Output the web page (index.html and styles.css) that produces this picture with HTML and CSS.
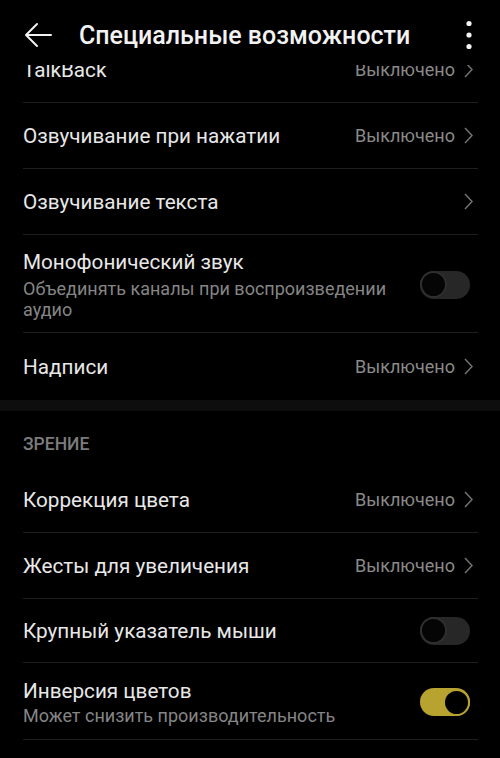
FILE: index.html
```html
<!DOCTYPE html>
<html lang="ru">
<head>
  <meta charset="UTF-8">
  <title>Специальные возможности</title>
  <link rel="stylesheet" href="styles.css">
</head>
<body>
  <header class="topbar">
    <svg class="back" width="28" height="26" viewBox="0 0 28 26">
      <path d="M27 13H3M13 2L2 13l11 11" fill="none" stroke="#f2f2f2" stroke-width="2" stroke-linecap="round" stroke-linejoin="round"/>
    </svg>
    <h1 class="title">Специальные возможности</h1>
    <svg class="more" width="8" height="30" viewBox="0 0 8 30">
      <circle cx="4" cy="3.5" r="2.6" fill="#f2f2f2"/>
      <circle cx="4" cy="15" r="2.6" fill="#f2f2f2"/>
      <circle cx="4" cy="26.5" r="2.6" fill="#f2f2f2"/>
    </svg>
  </header>

  <div class="viewport">
    <div class="list">
      <div class="row">
        <span class="label">TalkBack</span>
        <span class="value">Выключено</span>
        <svg class="chev" width="9" height="17" viewBox="0 0 9 17"><path d="M1 1l7 7.5L1 16" fill="none" stroke="#727272" stroke-width="1.5"/></svg>
      </div>
      <div class="row">
        <span class="label">Озвучивание при нажатии</span>
        <span class="value">Выключено</span>
        <svg class="chev" width="9" height="17" viewBox="0 0 9 17"><path d="M1 1l7 7.5L1 16" fill="none" stroke="#727272" stroke-width="1.5"/></svg>
      </div>
      <div class="row">
        <span class="label">Озвучивание текста</span>
        <svg class="chev" width="9" height="17" viewBox="0 0 9 17"><path d="M1 1l7 7.5L1 16" fill="none" stroke="#727272" stroke-width="1.5"/></svg>
      </div>
      <div class="row row-tall">
        <div class="text">
          <div class="label">Монофонический звук</div>
          <div class="sub">Объединять каналы при воспроизведении аудио</div>
        </div>
        <span class="switch"></span>
      </div>
      <div class="row row-last">
        <span class="label">Надписи</span>
        <span class="value">Выключено</span>
        <svg class="chev" width="9" height="17" viewBox="0 0 9 17"><path d="M1 1l7 7.5L1 16" fill="none" stroke="#727272" stroke-width="1.5"/></svg>
      </div>

      <div class="gap"></div>
      <div class="section">ЗРЕНИЕ</div>

      <div class="row">
        <span class="label">Коррекция цвета</span>
        <span class="value">Выключено</span>
        <svg class="chev" width="9" height="17" viewBox="0 0 9 17"><path d="M1 1l7 7.5L1 16" fill="none" stroke="#727272" stroke-width="1.5"/></svg>
      </div>
      <div class="row">
        <span class="label">Жесты для увеличения</span>
        <span class="value">Выключено</span>
        <svg class="chev" width="9" height="17" viewBox="0 0 9 17"><path d="M1 1l7 7.5L1 16" fill="none" stroke="#727272" stroke-width="1.5"/></svg>
      </div>
      <div class="row row-short">
        <span class="label">Крупный указатель мыши</span>
        <span class="switch"></span>
      </div>
      <div class="row row-mid">
        <div class="text">
          <div class="label">Инверсия цветов</div>
          <div class="sub">Может снизить производительность</div>
        </div>
        <span class="switch on"></span>
      </div>
    </div>
  </div>
</body>
</html>
```

FILE: styles.css
```css
body {
  margin: 0;
  background: #000;
  color: #e8e8e8;
  font-family: Roboto, "Noto Sans", sans-serif;
  height: 758px;
  overflow: hidden;
}
.topbar {
  height: 65px;
  display: flex;
  align-items: center;
  padding: 7px 0 0 24px;
  box-sizing: border-box;
  background: #000;
}
.back {
  margin-top: -2px;
}
.title {
  margin: -1px 0 0 27px;
  font-size: 25px;
  font-weight: 500;
  color: #f2f2f2;
  flex: 1;
}
.more {
  margin-right: 27px;
  margin-top: -2px;
}
.viewport {
  height: 693px;
  overflow: hidden;
}
.list {
  margin-top: -28px;
}
.row {
  height: 66px;
  margin: 0 22px 0 23px;
  border-bottom: 1px solid #1e1e1e;
  display: flex;
  align-items: center;
  box-sizing: border-box;
}
.row-short {
  height: 64px;
}
.row-last {
  border-bottom: none;
  height: 67px;
}
.label {
  font-size: 20.7px;
  color: #e8e8e8;
  flex: 1;
  line-height: 24px;
}
.value {
  font-size: 18px;
  color: #8a8a8a;
  margin-right: 9px;
}
.chev {
  margin-right: 5px;
  flex: none;
}
.row-tall {
  height: 98px;
  padding: 15px 0 13px;
}
.row-mid {
  height: 77px;
  padding: 16px 0 14px;
}
.text {
  flex: 1;
  align-self: flex-start;
}
.sub {
  font-size: 18px;
  line-height: 21px;
  color: #858585;
  margin-top: 4px;
  padding-right: 8px;
}
.row-mid .sub {
  margin-top: 2px;
}
.switch {
  width: 50px;
  height: 28px;
  border-radius: 14px;
  background: #272727;
  box-sizing: border-box;
  display: flex;
  align-items: center;
  margin-right: 8px;
  flex: none;
}
.switch::before {
  content: "";
  width: 27px;
  height: 27px;
  border-radius: 50%;
  background: #050505;
  border: 2px solid #2f2f2f;
  box-sizing: border-box;
}
.switch.on {
  background: #b8a230;
  justify-content: flex-end;
}
.switch.on::before {
  border: 2.5px solid #b8a230;
  background: #000;
}
.gap {
  height: 11px;
  background: #0e0e0e;
}
.section {
  height: 56px;
  padding: 23px 23px 0;
  box-sizing: border-box;
  font-size: 17.5px;
  font-weight: 500;
  line-height: 20px;
  color: #7c7c7c;
}
```
